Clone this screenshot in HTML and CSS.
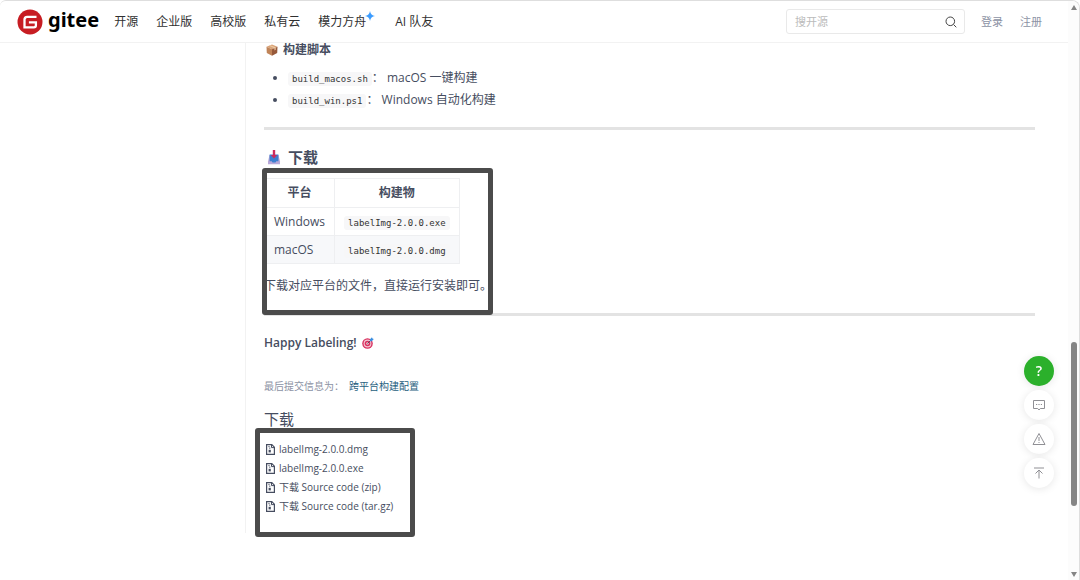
FILE: index.html
```
<!DOCTYPE html>
<html lang="zh-CN">
<head>
  <meta charset="UTF-8">
  <meta name="viewport" content="width=device-width, initial-scale=1.0">
  <title>labelImg 2.0.0 - Gitee</title>
  <link rel="stylesheet" href="styles.css">
</head>
<body>

<!-- file icon shared by the download list -->
<svg class="defs" aria-hidden="true">
  <symbol id="icon-file" viewBox="0 0 9 11">
    <path d="M.6.6h5.200L8.400 3.200v7.200H.6z" fill="none" stroke="currentColor" stroke-width="1.200"/>
    <path d="M5.500.6v3h3M3 2v1.200M3.800 3.600v1.200" fill="none" stroke="currentColor"/>
    <path d="M2.600 5.800h2.200v2.600H2.600z" fill="currentColor"/>
  </symbol>
</svg>

<div class="window">
  <div class="page">
    <header>
      <a class="logo" href="#" aria-label="gitee">
        <svg width="26" height="26" viewBox="0 0 26 26" aria-hidden="true">
          <circle cx="13" cy="13" r="12.500" fill="#c71d23"/>
          <path d="M19.500 7.900H10.200Q7.500 7.900 7.500 10.600v7.700h9.300q2.100 0 2.100-2.100V13.400h-7" fill="none" stroke="#fff" stroke-width="2.300"/>
        </svg>
        <span>gitee</span>
      </a>
      <nav>
        <a href="#">开源</a>
        <a href="#">企业版</a>
        <a href="#">高校版</a>
        <a href="#">私有云</a>
        <a class="ark" href="#">模力方舟<svg viewBox="0 0 10 10" aria-hidden="true"><path d="M5 0Q5.700 4.300 10 5 5.700 5.700 5 10 4.300 5.700 0 5 4.300 4.300 5 0z" fill="#3b9cff"/></svg></a>
        <a href="#">AI 队友</a>
      </nav>
      <form class="search">
        <input type="text" placeholder="搜开源" aria-label="搜开源">
        <button type="button" aria-label="搜索">
          <svg width="12" height="12" viewBox="0 0 12 12" fill="none" stroke="#444" aria-hidden="true"><circle cx="5.300" cy="5.300" r="4.300"/><path d="M8.500 8.500l2.800 2.800"/></svg>
        </button>
      </form>
      <div class="account">
        <a href="#">登录</a>
        <a href="#">注册</a>
      </div>
    </header>

    <main>
      <h4>
        <svg class="emoji" viewBox="0 0 12 12" aria-hidden="true">
          <path d="M6 .5l5.500 2.300L6 5.300.5 2.800z" fill="#d9a378"/>
          <path d="M.5 2.800L6 5.300v6.400L.8 9z" fill="#c08458"/>
          <path d="M11.500 2.800L6 5.300v6.400L11.200 9z" fill="#97593a"/>
          <path d="M3 1.700l5.500 2.500v2.200l1.200-.6V3.600L4.300 1.200z" fill="#edcba5"/>
        </svg>
        构建脚本
      </h4>
      <ul class="scripts">
        <li><code>build_macos.sh</code>： macOS 一键构建</li>
        <li><code>build_win.ps1</code>： Windows 自动化构建</li>
      </ul>

      <hr>

      <h3>
        <svg class="emoji tray" viewBox="0 0 14 16" aria-hidden="true">
          <path d="M2.500 6h9L13 12.500v2.700H1v-2.700z" fill="#b9a8d8"/>
          <path d="M2.600 5.500h8.800v6.800H9.300l-.8 1.300h-3l-.8-1.300H2.600z" fill="#3c7ed0"/>
          <path d="M5.800 1h2.400v5h2L7 9.500 3.800 6h2z" fill="#cc2b5e"/>
        </svg>
        下载
      </h3>
      <section class="marked builds">
        <table>
          <thead>
            <tr><th>平台</th><th>构建物</th></tr>
          </thead>
          <tbody>
            <tr><td>Windows</td><td><code>labelImg-2.0.0.exe</code></td></tr>
            <tr><td>macOS</td><td><code>labelImg-2.0.0.dmg</code></td></tr>
          </tbody>
        </table>
        <p>下载对应平台的文件，直接运行安装即可。</p>
      </section>

      <hr>

      <p class="happy">
        <strong>Happy Labeling!</strong>
        <svg class="emoji" viewBox="0 0 12 12" aria-hidden="true">
          <circle cx="5.500" cy="6.500" r="5.300" fill="#d9315f"/>
          <circle cx="5.500" cy="6.500" r="3.900" fill="#f3c6d3"/>
          <circle cx="5.500" cy="6.500" r="2.800" fill="#d9315f"/>
          <circle cx="5.500" cy="6.500" r="1.300" fill="#f3c6d3"/>
          <path d="M5.500 6.500L9 3" stroke="#345" stroke-width=".8"/>
          <path d="M8 2.300L10 .3l.4 1.300 1.400.4-2 2.200H8z" fill="#3a8ee0"/>
        </svg>
      </p>

      <p class="commit"><span>最后提交信息为：</span><a href="#">跨平台构建配置</a></p>

      <h3 class="plain">下载</h3>
      <section class="marked files">
        <ul>
          <li><a href="#"><svg aria-hidden="true"><use href="#icon-file"/></svg>labelImg-2.0.0.dmg</a></li>
          <li><a href="#"><svg aria-hidden="true"><use href="#icon-file"/></svg>labelImg-2.0.0.exe</a></li>
          <li><a href="#"><svg aria-hidden="true"><use href="#icon-file"/></svg>下载 Source code (zip)</a></li>
          <li><a href="#"><svg aria-hidden="true"><use href="#icon-file"/></svg>下载 Source code (tar.gz)</a></li>
        </ul>
      </section>
    </main>
  </div>

  <div class="scrollbar" aria-hidden="true">
    <svg width="6" height="5" viewBox="0 0 6 5"><path d="M3 0l3 5H0z" fill="#858585"/></svg>
    <div class="track"><div class="thumb"></div></div>
    <svg width="6" height="5" viewBox="0 0 6 5"><path d="M0 0h6L3 5z" fill="#858585"/></svg>
  </div>
</div>

<div class="side-tools">
  <button class="help" type="button" aria-label="帮助">?</button>
  <button type="button" aria-label="评论">
    <svg viewBox="0 0 14 14"><path d="M1.500 2.500h11v8H8.300L7 12l-1.300-1.500H1.500z"/><path d="M4 6.500h1.200M6.400 6.500h1.200M8.800 6.500H10"/></svg>
  </button>
  <button type="button" aria-label="举报">
    <svg viewBox="0 0 14 14"><path d="M7 1.500l6 11H1z"/><path d="M7 5v4M7 10v1"/></svg>
  </button>
  <button type="button" aria-label="回到顶部">
    <svg viewBox="0 0 14 14"><path d="M2 2h10M7 12.500V4M3.500 7.500L7 4l3.500 3.500"/></svg>
  </button>
</div>

</body>
</html>
```
FILE: styles.css
```
:root {
  --text-color: #464d60;
  --nav-color: #303030;
  --muted-color: #8c92a4;
  --line-color: #eeeff1;
  --mark-color: #4b4b4b;
}
* { box-sizing: border-box; }
body {
  font-family: "Open Sans", "Noto Sans CJK SC", sans-serif;
  font-size: 12px;
  line-height: 22px;
  margin: 0;
  color: var(--text-color);
  background-color: #fff;
}
h3, h4, p, ul { margin: 0; padding: 0; }
a { color: inherit; text-decoration: none; }
button { font: inherit; border: none; padding: 0; cursor: pointer; }
.defs { display: none; }

.window {
  display: flex;
  height: 100vh;
  overflow: hidden;
  border: 1px solid #dedede;
  border-width: 1px 1px 0 0;
  border-radius: 6px 8px 0 0;
}
.page { flex: 1; }

/* header */
header {
  display: flex;
  align-items: center;
  height: 42px;
  padding: 0 26px 0 17px;
  border-bottom: 1px solid #f2f2f2;
  color: var(--nav-color);
}
.logo {
  display: flex;
  align-items: center;
  gap: 5px;
  color: #000;
  font-family: "Noto Sans", sans-serif;
  font-size: 20px;
  font-weight: 700;
}
.logo span { margin-top: -4px; }
nav {
  display: flex;
  gap: 18px;
  margin-left: 15px;
}
.ark { position: relative; margin-right: 11px; }
.ark svg {
  position: absolute;
  top: 0;
  right: -9px;
  width: 10px;
  height: 10px;
}
.search {
  display: flex;
  align-items: center;
  width: 179px;
  height: 25px;
  margin-left: auto;
  padding: 0 7px 0 8px;
  border: 1px solid #e9e9e9;
  border-radius: 3px;
}
.search input {
  flex: 1;
  min-width: 0;
  padding: 0;
  border: none;
  outline: none;
  background: none;
  font: inherit;
  font-size: 11px;
}
.search input::placeholder { color: #bbb; }
.search button { display: flex; background: none; }
.account {
  display: flex;
  gap: 17px;
  margin-left: 16px;
  font-size: 11px;
  color: var(--muted-color);
}

/* release notes */
main {
  margin-left: 245px;
  padding: 0 33px 0 18px;
  border-left: 1px solid #f2f2f2;
}
h4 { font-size: 12px; line-height: 14px; }
h3 { font-size: 15px; line-height: 22px; }
.emoji {
  width: 12px;
  height: 12px;
  margin: 0 2px;
  vertical-align: -2px;
}
.tray {
  width: 14px;
  height: 16px;
  margin: 0 3px;
}
.scripts {
  margin-top: 10px;
  padding-left: 24px;
}
code {
  padding: 2px 4px;
  border-radius: 3px;
  background-color: #f7f7f8;
  color: #333;
  font-family: "DejaVu Sans Mono", monospace;
  font-size: 9px;
  line-height: 1;
}
hr {
  height: 3px;
  margin: 16px 0;
  border: none;
  background-color: #e3e3e3;
}
table {
  border-collapse: collapse;
  margin: 10px 0 11px;
}
th, td {
  height: 28px;
  padding: 2px 9px;
  border: 1px solid var(--line-color);
  text-align: left;
}
th { height: 29px; text-align: center; }
tbody tr:nth-child(2) { background-color: #f7f8fa; }
.happy strong { font-weight: 600; }
.commit {
  display: flex;
  gap: 5px;
  margin-top: 21px;
  font-size: 10px;
  color: var(--muted-color);
}
.commit a { color: #1f5f80; }
.plain {
  margin-top: 11px;
  font-weight: 400;
}

/* frames around the download areas */
.marked {
  position: relative;
  width: fit-content;
}
.marked::after {
  content: "";
  position: absolute;
  border: 5px solid var(--mark-color);
  border-radius: 3px;
  pointer-events: none;
}
.builds::after { inset: -10px -1px -18px -2px; }
.files {
  margin-top: 10px;
  padding-bottom: 17px;
}
.files::after { inset: -12px -22px -4px -9px; }
.files ul { list-style: none; }
.files li {
  font-size: 10px;
  line-height: 19px;
}
.files a { display: flex; align-items: center; }
.files svg {
  width: 9px;
  height: 11px;
  margin: 0 4px 0 2px;
}

/* window scrollbar */
.scrollbar {
  display: flex;
  flex-direction: column;
  align-items: center;
  width: 11px;
  padding: 4px 0 3px;
  background-color: #fcfcfc;
}
.track {
  flex: 1;
  display: flex;
  flex-direction: column;
  justify-content: flex-end;
  padding-bottom: 66px;
}
.thumb {
  width: 6px;
  height: 33%;
  border-radius: 3px;
  background-color: #858585;
}

/* floating buttons */
.side-tools {
  position: fixed;
  right: 26px;
  bottom: 92px;
  display: flex;
  flex-direction: column;
  gap: 4px;
}
.side-tools button {
  display: flex;
  align-items: center;
  justify-content: center;
  width: 30px;
  height: 30px;
  border-radius: 50%;
  background-color: #fff;
  box-shadow: 0 1px 8px rgba(0,0,0,0.1);
}
.side-tools .help {
  background-color: #2bb02b;
  color: #fff;
  font-size: 14px;
  font-weight: 600;
}
.side-tools svg {
  width: 14px;
  height: 14px;
  fill: none;
  stroke: #8f8f94;
}
```
